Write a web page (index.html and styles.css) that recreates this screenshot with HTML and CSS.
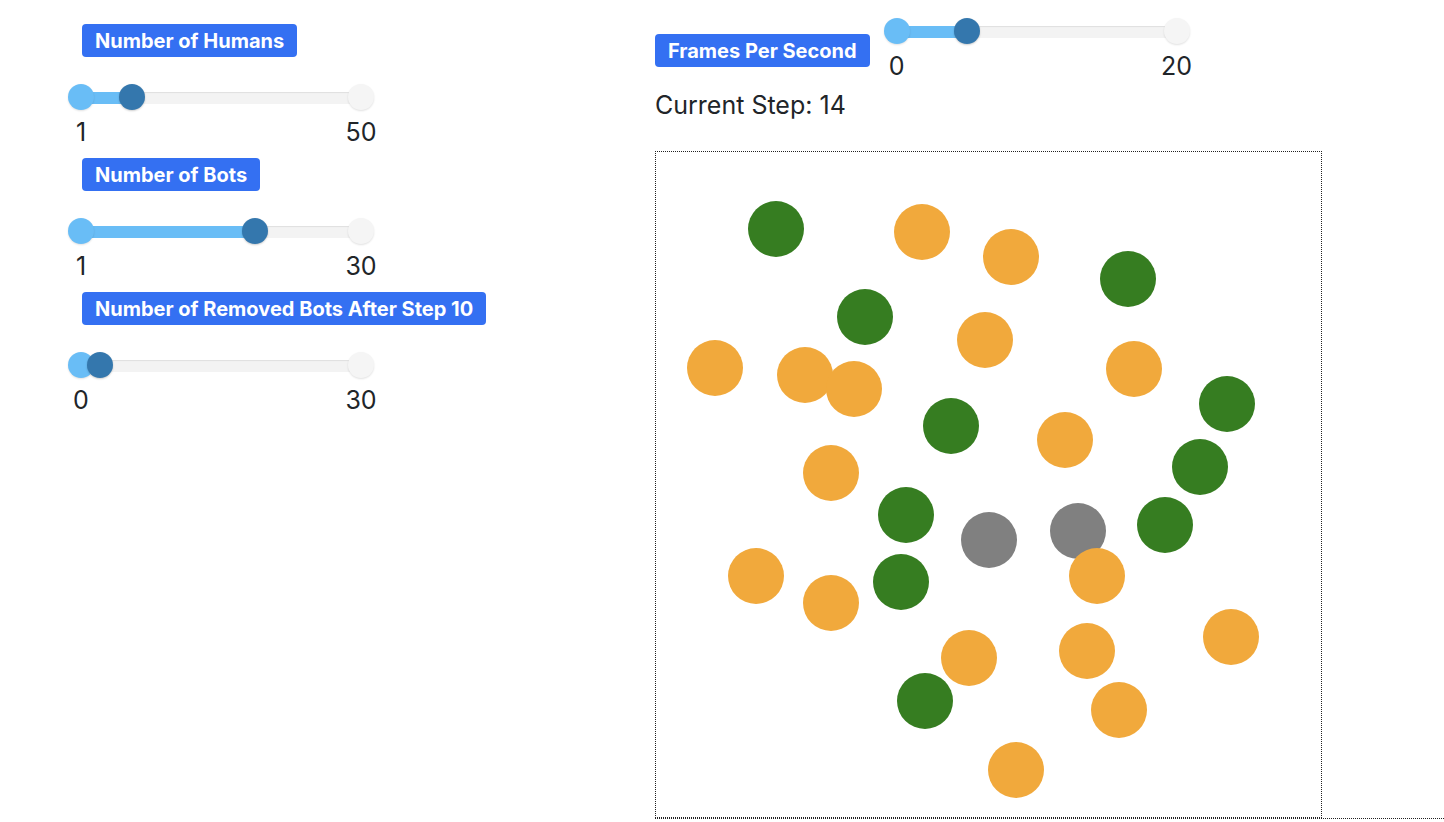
FILE: index.html
```html
<!DOCTYPE html>
<html lang="en">
<head>
<meta charset="utf-8">
<title>Simulation</title>
<link rel="stylesheet" href="styles.css">
</head>
<body>
<div class="page">
  <div class="controls">
    <div class="group">
      <span class="badge">Number of Humans</span>
      <div class="slider">
        <div class="rail"><div class="fill" style="width:51px"></div></div>
        <span class="cap cap-min"></span>
        <span class="handle" style="left:51px"></span>
        <span class="cap cap-max"></span>
      </div>
      <div class="marks"><span class="mark">1</span><span class="mark">50</span></div>
    </div>
    <div class="group">
      <span class="badge">Number of Bots</span>
      <div class="slider">
        <div class="rail"><div class="fill" style="width:174px"></div></div>
        <span class="cap cap-min"></span>
        <span class="handle" style="left:174px"></span>
        <span class="cap cap-max"></span>
      </div>
      <div class="marks"><span class="mark">1</span><span class="mark">30</span></div>
    </div>
    <div class="group">
      <span class="badge">Number of Removed Bots After Step 10</span>
      <div class="slider">
        <div class="rail"><div class="fill" style="width:19px"></div></div>
        <span class="cap cap-min"></span>
        <span class="handle" style="left:19px"></span>
        <span class="cap cap-max"></span>
      </div>
      <div class="marks"><span class="mark">0</span><span class="mark">30</span></div>
    </div>
  </div>
  <div class="stage">
    <div class="fps-row">
      <span class="badge badge-fps">Frames Per Second</span>
      <div class="fps-slider">
        <div class="slider">
          <div class="rail"><div class="fill" style="width:70px"></div></div>
          <span class="cap cap-min"></span>
          <span class="handle" style="left:70px"></span>
          <span class="cap cap-max"></span>
        </div>
        <div class="marks"><span class="mark">0</span><span class="mark">20</span></div>
      </div>
    </div>
    <div class="step">Current Step: 14</div>
    <div class="canvas">
      <svg class="world" viewBox="0 0 665 665" width="665" height="665">
        <g fill="#808080">
          <circle cx="333" cy="388" r="28"/>
          <circle cx="422" cy="379" r="28"/>
        </g>
        <g fill="#367d21">
          <circle cx="120" cy="77" r="28"/>
          <circle cx="209" cy="165" r="28"/>
          <circle cx="472" cy="127" r="28"/>
          <circle cx="295" cy="274" r="28"/>
          <circle cx="571" cy="252" r="28"/>
          <circle cx="544" cy="315" r="28"/>
          <circle cx="250" cy="363" r="28"/>
          <circle cx="509" cy="373" r="28"/>
          <circle cx="245" cy="430" r="28"/>
          <circle cx="269" cy="549" r="28"/>
        </g>
        <g fill="#f1a93c">
          <circle cx="266" cy="80" r="28"/>
          <circle cx="355" cy="105" r="28"/>
          <circle cx="329" cy="188" r="28"/>
          <circle cx="59" cy="216" r="28"/>
          <circle cx="149" cy="223" r="28"/>
          <circle cx="198" cy="237" r="28"/>
          <circle cx="478" cy="217" r="28"/>
          <circle cx="409" cy="288" r="28"/>
          <circle cx="175" cy="321" r="28"/>
          <circle cx="100" cy="424" r="28"/>
          <circle cx="175" cy="451" r="28"/>
          <circle cx="441" cy="424" r="28"/>
          <circle cx="575" cy="485" r="28"/>
          <circle cx="313" cy="506" r="28"/>
          <circle cx="431" cy="499" r="28"/>
          <circle cx="463" cy="558" r="28"/>
          <circle cx="360" cy="618" r="28"/>
        </g>
      </svg>
    </div>
    <div class="floor"></div>
  </div>
</div>
</body>
</html>
```
FILE: styles.css
```css
html, body {
  margin: 0;
  padding: 0;
  background: #ffffff;
}
body {
  font-family: Inter, "Liberation Sans", sans-serif;
  color: #212529;
  font-size: 25px;
}
.page {
  display: flex;
  align-items: flex-start;
  padding-left: 68px;
}
.controls {
  width: 306px;
  flex: none;
  padding-top: 24px;
}
.group {
  display: flex;
  flex-direction: column;
  align-items: flex-start;
  height: 134px;
}
.badge {
  display: inline-block;
  background: #3470f2;
  color: #ffffff;
  font-weight: 700;
  font-size: 20px;
  line-height: 23px;
  padding: 6px 13px 4px;
  border-radius: 4px;
  margin-left: 14px;
  white-space: nowrap;
}
.slider {
  position: relative;
  width: 306px;
  height: 26px;
  display: flex;
  justify-content: space-between;
  align-items: center;
}
.group .slider {
  margin-top: 27px;
}
.rail {
  position: absolute;
  left: 13px;
  right: 13px;
  top: 8px;
  height: 12px;
  background: #f3f3f3;
  box-shadow: inset 0 1px 1px rgba(0, 0, 0, 0.08);
}
.fill {
  height: 100%;
  background: #69bdf6;
}
.cap {
  position: relative;
  width: 26px;
  height: 26px;
  border-radius: 50%;
}
.cap-min {
  background: #69bdf6;
  box-shadow: 0 1px 2px rgba(0, 0, 0, 0.12);
}
.cap-max {
  background: #f5f5f5;
  box-shadow: 0 1px 2px rgba(0, 0, 0, 0.12);
}
.handle {
  position: absolute;
  top: 0;
  width: 26px;
  height: 26px;
  border-radius: 50%;
  background: #3477ad;
  box-shadow: 0 1px 2px rgba(0, 0, 0, 0.2);
}
.marks {
  display: flex;
  justify-content: space-between;
  width: 306px;
  margin-top: 7px;
  line-height: 30px;
}
.mark {
  width: 26px;
  display: flex;
  justify-content: center;
  white-space: nowrap;
}
.stage {
  flex: 1;
  margin-left: 281px;
  padding-top: 18px;
  display: flex;
  flex-direction: column;
  align-items: flex-start;
}
.fps-row {
  display: flex;
  align-items: flex-start;
  gap: 14px;
}
.badge-fps {
  margin-left: 0;
  margin-top: 16px;
}
.step {
  margin-top: 9px;
  line-height: 30px;
}
.canvas {
  margin-top: 31px;
  width: 665px;
  height: 665px;
  border: 1px dotted #222;
}
.world {
  display: block;
}
.floor {
  align-self: stretch;
  border-top: 1px dotted #222;
}
```
